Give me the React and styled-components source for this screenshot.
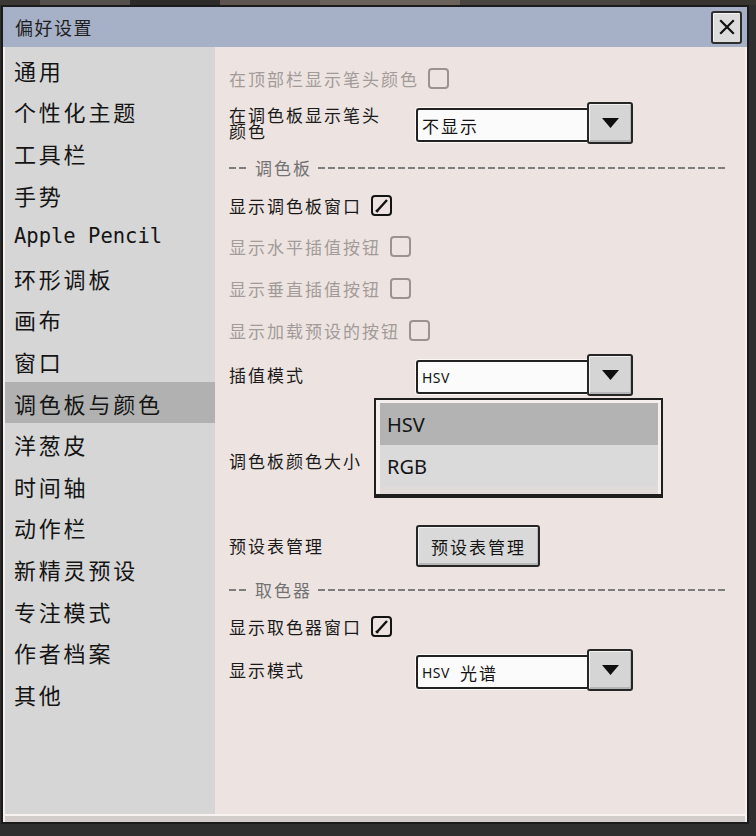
import React from "react";
import styled, { createGlobalStyle } from "styled-components";

const GlobalStyle = createGlobalStyle`
  html, body {
    margin: 0;
    padding: 0;
    background: #2f2f2f;
    font-family: "Noto Sans CJK SC", "Noto Sans", sans-serif;
  }
  * {
    box-sizing: border-box;
  }
`;

const Page = styled.div`
  width: 756px;
  height: 836px;
  overflow: hidden;
  background: #2f2f2f;
`;

const TopStrip = styled.div`
  height: 5px;
  background: linear-gradient(
    to right,
    #3a3735 0 40px,
    #55504c 40px 130px,
    #2d2b2a 130px 220px,
    #5e5550 220px 320px,
    #6b625c 320px 460px,
    #4a4541 460px 640px,
    #38342f 640px 756px
  );
`;

const Window = styled.div`
  margin-left: 1px;
  width: 748px;
  height: 819px;
  border: 2px solid #1b1b1b;
  display: flex;
  flex-direction: column;
`;

const TitleBar = styled.div`
  height: 40px;
  flex-shrink: 0;
  background: #a6b0c7;
  display: flex;
  align-items: center;
  justify-content: space-between;
  padding: 0 5px 0 12px;
`;

const TitleText = styled.div`
  font-size: 18px;
  letter-spacing: 1.5px;
  color: #1e1e1e;
`;

const CloseButton = styled.div`
  width: 31px;
  height: 33px;
  background: #dcdcdc;
  border: 2px solid #2e2e2e;
  border-radius: 3px;
  box-shadow: inset 1px 1px 0 #f4f4f4;
  display: flex;
  align-items: center;
  justify-content: center;
`;

const Body = styled.div`
  flex: 1;
  display: flex;
  flex-direction: column;
  padding: 0 2px;
  background: #f5efed;
`;

const Main = styled.div`
  height: 767px;
  display: flex;
`;

const BottomStrip = styled.div`
  height: 8px;
  border-top: 2px solid #f8f2f0;
  background: #d3cecb;
`;

const Sidebar = styled.div`
  width: 210px;
  flex-shrink: 0;
  background: #d6d6d6;
  padding-top: 2px;
`;

const NavItem = styled.div`
  height: 41.6px;
  display: flex;
  align-items: center;
  padding-left: 9px;
  font-size: 22px;
  letter-spacing: 2.8px;
  color: #141414;
  background: ${(p) => (p.$active ? "#b1b1b1" : "transparent")};
`;

const NavMono = styled.span`
  font-family: "DejaVu Sans Mono", "Liberation Mono", monospace;
  font-size: 20.5px;
  letter-spacing: 0;
`;

const Content = styled.div`
  flex: 1;
  background: #ede4e1;
  padding: 10px 17px 0 14px;
  display: flex;
  flex-direction: column;
`;

const Row = styled.div`
  height: ${(p) => p.$h}px;
  display: flex;
  align-items: center;
  position: relative;
  z-index: ${(p) => (p.$raised ? 3 : "auto")};
`;

const Label = styled.span`
  font-size: 17px;
  letter-spacing: 2px;
  color: ${(p) => (p.$disabled ? "#a29b99" : "#1a1a1a")};
  margin-right: 9px;
`;

const FieldLabel = styled.div`
  width: 187px;
  flex-shrink: 0;
  padding-right: 20px;
  font-size: 17px;
  line-height: 16px;
  letter-spacing: 2px;
  color: #1a1a1a;
`;

const Box = styled.div`
  width: 21px;
  height: 21px;
  border: 2px solid ${(p) => (p.$disabled ? "#9a9391" : "#141414")};
  border-radius: 4px;
  display: flex;
  align-items: center;
  justify-content: center;
`;

const Section = styled.div`
  flex: 1;
  display: flex;
  align-items: center;
  font-size: 17px;
  letter-spacing: 2px;
  color: #727272;
`;

const Dash = styled.div`
  height: 2px;
  width: ${(p) => (p.$w ? `${p.$w}px` : "auto")};
  flex: ${(p) => (p.$w ? "none" : "1")};
  margin-top: 2px;
  background: repeating-linear-gradient(
    to right,
    #7d7d7d 0 7px,
    transparent 7px 10px
  );
`;

const SectionText = styled.span`
  margin: 0 6px 0 6px;
`;

const SelectWrap = styled.div`
  position: relative;
  display: flex;
  align-items: flex-end;
  height: 42px;
`;

const SelectField = styled.div`
  width: 171px;
  height: 34px;
  margin-bottom: 2px;
  background: #fbfbfb;
  border: 2px solid #222;
  border-right: none;
  border-radius: 3px 0 0 3px;
  box-shadow: 0 0 0 1px #fbf8f7;
  display: flex;
  align-items: center;
  padding-left: 4px;
  font-size: 17px;
  letter-spacing: 2px;
  color: #141414;
`;

const SmallLatin = styled.span`
  font-family: "Noto Sans", "DejaVu Sans", sans-serif;
  font-size: 14px;
  letter-spacing: 0.5px;
  margin-right: ${(p) => (p.$gap ? "10px" : "0")};
`;

const SelectButton = styled.div`
  width: 46px;
  height: 42px;
  background: #d5d5d5;
  border: 2px solid #262626;
  border-radius: 3px;
  box-shadow: inset 1px 1px 0 #f0f0f0, inset -1px -2px 0 #b5b5b5;
  display: flex;
  align-items: center;
  justify-content: center;
`;

const PushButton = styled.div`
  height: 42px;
  padding: 0 12px 0 13px;
  background: #d9d9d9;
  border: 2px solid #262626;
  border-radius: 3px;
  box-shadow: inset 1px 1px 0 #f2f2f2, inset -1px -2px 0 #b8b8b8;
  display: flex;
  align-items: center;
  font-size: 17px;
  letter-spacing: 2px;
  color: #141414;
`;

const Popup = styled.div`
  position: absolute;
  left: -42px;
  top: calc(100% + 2px);
  width: 289px;
  height: 100px;
  z-index: 5;
  background: #f4efed;
  border: 2px solid #1e1e1e;
  border-bottom-width: 4px;
  padding: 3px 3px 0 4px;
  display: flex;
  flex-direction: column;
`;

const PopupItem = styled.div`
  height: 42px;
  flex-shrink: 0;
  display: flex;
  align-items: center;
  padding-left: 7px;
  font-family: "Noto Sans", "DejaVu Sans", sans-serif;
  font-size: 20px;
  color: #141414;
  background: ${(p) => (p.$selected ? "#b3b3b3" : "#dadada")};
`;

const PopupFoot = styled.div`
  flex: 1;
  background: #e0dbd8;
`;

function CloseIcon() {
  return (
    <svg width="16" height="16" viewBox="0 0 16 16">
      <path d="M2 2 L14 14 M14 2 L2 14" stroke="#111" strokeWidth="2.2" strokeLinecap="square" />
    </svg>
  );
}

function Arrow() {
  return (
    <svg width="17" height="10" viewBox="0 0 17 10">
      <polygon points="0,0 17,0 8.5,10" fill="#0e0e0e" />
    </svg>
  );
}

function CheckBox({ checked, disabled }) {
  return (
    <Box $disabled={disabled}>
      {checked && (
        <svg width="15" height="15" viewBox="0 0 15 15">
          <path d="M2 12 L4 14 M3 13 L13 2" stroke="#111" strokeWidth="2.4" fill="none" />
        </svg>
      )}
    </Box>
  );
}

function Select({ children, open }) {
  return (
    <SelectWrap>
      <SelectField>{children}</SelectField>
      <SelectButton>
        <Arrow />
      </SelectButton>
      {open && (
        <Popup>
          <PopupItem $selected>HSV</PopupItem>
          <PopupItem>RGB</PopupItem>
          <PopupFoot />
        </Popup>
      )}
    </SelectWrap>
  );
}

const navItems = [
  { label: "通用" },
  { label: "个性化主题" },
  { label: "工具栏" },
  { label: "手势" },
  { label: "Apple Pencil", mono: true },
  { label: "环形调板" },
  { label: "画布" },
  { label: "窗口" },
  { label: "调色板与颜色", active: true },
  { label: "洋葱皮" },
  { label: "时间轴" },
  { label: "动作栏" },
  { label: "新精灵预设" },
  { label: "专注模式" },
  { label: "作者档案" },
  { label: "其他" },
];

export default function App() {
  return (
    <Page>
      <GlobalStyle />
      <TopStrip />
      <Window>
        <TitleBar>
          <TitleText>偏好设置</TitleText>
          <CloseButton>
            <CloseIcon />
          </CloseButton>
        </TitleBar>
        <Body>
          <Main>
            <Sidebar>
              {navItems.map((item) => (
                <NavItem key={item.label} $active={item.active}>
                  {item.mono ? <NavMono>{item.label}</NavMono> : item.label}
                </NavItem>
              ))}
            </Sidebar>
            <Content>
              <Row $h={42}>
                <Label $disabled>在顶部栏显示笔头颜色</Label>
                <CheckBox disabled />
              </Row>
              <Row $h={48}>
                <FieldLabel>在调色板显示笔头颜色</FieldLabel>
                <Select>不显示</Select>
              </Row>
              <Row $h={40}>
                <Section>
                  <Dash $w={20} />
                  <SectionText>调色板</SectionText>
                  <Dash />
                </Section>
              </Row>
              <Row $h={36}>
                <Label>显示调色板窗口</Label>
                <CheckBox checked />
              </Row>
              <Row $h={46}>
                <Label $disabled>显示水平插值按钮</Label>
                <CheckBox disabled />
              </Row>
              <Row $h={38}>
                <Label $disabled>显示垂直插值按钮</Label>
                <CheckBox disabled />
              </Row>
              <Row $h={46}>
                <Label $disabled>显示加载预设的按钮</Label>
                <CheckBox disabled />
              </Row>
              <Row $h={44} $raised>
                <FieldLabel>插值模式</FieldLabel>
                <Select open>
                  <SmallLatin>HSV</SmallLatin>
                </Select>
              </Row>
              <Row $h={128}>
                <FieldLabel>调色板颜色大小</FieldLabel>
              </Row>
              <Row $h={42}>
                <FieldLabel>预设表管理</FieldLabel>
                <PushButton>预设表管理</PushButton>
              </Row>
              <Row $h={44}>
                <Section>
                  <Dash $w={20} />
                  <SectionText>取色器</SectionText>
                  <Dash />
                </Section>
              </Row>
              <Row $h={30}>
                <Label>显示取色器窗口</Label>
                <CheckBox checked />
              </Row>
              <Row $h={58}>
                <FieldLabel>显示模式</FieldLabel>
                <Select>
                  <SmallLatin $gap>HSV</SmallLatin>光谱
                </Select>
              </Row>
            </Content>
          </Main>
          <BottomStrip />
        </Body>
      </Window>
    </Page>
  );
}
